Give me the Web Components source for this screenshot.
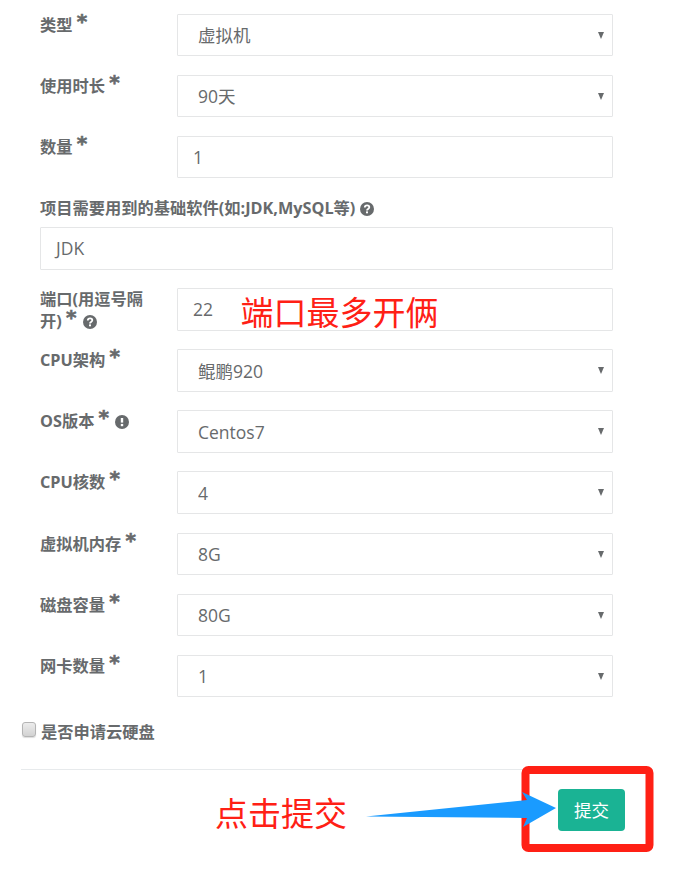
<!DOCTYPE html>
<html lang="zh">
<head>
<meta charset="utf-8">
<title>申请资源</title>
<style>
    html, body { margin: 0; background: #fff; }
    body {
        position: relative;
        height: 869px;
        overflow: hidden;
        color: #676a6c;
        font-family: "Open Sans", "Noto Sans CJK SC", sans-serif;
    }
</style>
</head>
<body>
<apply-form>
    <form-row label="类型" required><form-select value="虚拟机"></form-select></form-row>
    <form-row label="使用时长" required><form-select value="90天"></form-select></form-row>
    <form-row label="数量" required><form-input value="1"></form-input></form-row>
    <form-row label="项目需要用到的基础软件(如:JDK,MySQL等)" icon="question" stacked><form-input value="JDK" wide></form-input></form-row>
    <form-row label="端口(用逗号隔开)" required icon="question"><form-input value="22"></form-input></form-row>
    <form-row label="CPU架构" required><form-select value="鲲鹏920"></form-select></form-row>
    <form-row label="OS版本" required icon="exclamation"><form-select value="Centos7"></form-select></form-row>
    <form-row label="CPU核数" required><form-select value="4"></form-select></form-row>
    <form-row label="虚拟机内存" required><form-select value="8G"></form-select></form-row>
    <form-row label="磁盘容量" required><form-select value="80G"></form-select></form-row>
    <form-row label="网卡数量" required><form-select value="1"></form-select></form-row>
    <form-check label="是否申请云硬盘"></form-check>
    <form-footer>提交</form-footer>
</apply-form>
<note-marks></note-marks>

<script>
// 表单外层
class ApplyForm extends HTMLElement {
    constructor() {
        super();
        const shadow = this.attachShadow({mode: 'open'});
        shadow.innerHTML = `
            <style>
                :host {
                    display: flex;
                    flex-direction: column;
                    padding: 13.8px 61px 0 40px;
                }
            </style>
            <slot></slot>
        `;
    }
}

// 小图标
class HelpIcon extends HTMLElement {
    constructor() {
        super();
        const shadow = this.attachShadow({mode: 'open'});
        const glyph = this.getAttribute('type') === 'exclamation'
            ? `<path d="M7 3v4.6" stroke="#fff" stroke-width="2.4" fill="none"/><rect x="5.8" y="8.9" width="2.4" height="2.3" fill="#fff"/>`
            : `<path d="M4.8 5.6c0-1.4 1-2.2 2.3-2.2 1.3 0 2.2.8 2.2 1.9 0 1.8-2.3 1.7-2.3 3.2" stroke="#fff" stroke-width="1.8" fill="none"/><rect x="6" y="9.4" width="2" height="1.9" fill="#fff"/>`;
        shadow.innerHTML = `
            <style>
                :host { display: inline-block; width: 14px; height: 14px; vertical-align: -2px; }
                svg { display: block; }
            </style>
            <svg width="14" height="14" viewBox="0 0 14 14">
                <circle cx="7" cy="7" r="7" fill="#676a6c"/>${glyph}
            </svg>
        `;
    }
}

// 一行：标题 + 控件
class FormRow extends HTMLElement {
    constructor() {
        super();
        const shadow = this.attachShadow({mode: 'open'});
        const star = this.hasAttribute('required') ? ' <span class="star">*</span>' : '';
        const icon = this.getAttribute('icon');
        const iconHtml = icon ? ` <help-icon type="${icon}"></help-icon>` : '';
        shadow.innerHTML = `
            <style>
                :host {
                    display: grid;
                    grid-template-columns: 137px 436px;
                    height: 42.5px;
                    margin-bottom: 18.6px;
                }
                :host([stacked]) {
                    grid-template-columns: 573px;
                    grid-template-rows: 30px 42.5px;
                    height: 72.5px;
                }
                .label {
                    box-sizing: border-box;
                    width: 115px;
                    padding-top: 1px;
                    font-size: 16.25px;
                    font-weight: 700;
                    line-height: 21.5px;
                    color: #676a6c;
                }
                :host([stacked]) .label { width: auto; }
                .star {
                    font: 700 20px/0 "DejaVu Sans", sans-serif;
                    -webkit-text-stroke: 0.6px #676a6c;
                    position: relative;
                    top: -3px;
                    margin-right: 2px;
                    color: #676a6c;
                }
            </style>
            <div class="label">${this.getAttribute('label')}${star}${iconHtml}</div>
            <slot></slot>
        `;
    }
}

// 下拉框
class FormSelect extends HTMLElement {
    constructor() {
        super();
        const shadow = this.attachShadow({mode: 'open'});
        shadow.innerHTML = `
            <style>
                :host { display: block; position: relative; height: 42.5px; }
                select {
                    appearance: none;
                    -webkit-appearance: none;
                    box-sizing: border-box;
                    width: 100%;
                    height: 100%;
                    margin: 0;
                    padding: 0 30px 0 20px;
                    border: 1px solid #e5e6e7;
                    border-radius: 1px;
                    background: #fff;
                    color: #676a6c;
                    font: 17.5px "Open Sans", "Noto Sans CJK SC", sans-serif;
                }
                .arrow {
                    position: absolute;
                    right: 9px;
                    top: 18px;
                    width: 0;
                    height: 0;
                    border-left: 3.5px solid transparent;
                    border-right: 3.5px solid transparent;
                    border-top: 7px solid #676a6c;
                }
            </style>
            <select><option>${this.getAttribute('value')}</option></select>
            <span class="arrow"></span>
        `;
    }
}

// 输入框
class FormInput extends HTMLElement {
    constructor() {
        super();
        const shadow = this.attachShadow({mode: 'open'});
        shadow.innerHTML = `
            <style>
                :host { display: block; height: 42.5px; }
                div {
                    box-sizing: border-box;
                    height: 100%;
                    padding: 0 15px;
                    border: 1px solid #e5e6e7;
                    border-radius: 1px;
                    background: #fff;
                    color: #676a6c;
                    font-size: 17.5px;
                    line-height: 41px;
                }
            </style>
            <div>${this.getAttribute('value')}</div>
        `;
    }
}

// 复选框
class FormCheck extends HTMLElement {
    constructor() {
        super();
        const shadow = this.attachShadow({mode: 'open'});
        shadow.innerHTML = `
            <style>
                :host {
                    display: flex;
                    align-items: flex-start;
                    gap: 5px;
                    margin: 0 0 0 -18px;
                    height: 53px;
                    font-size: 16.25px;
                    font-weight: 700;
                    line-height: 32px;
                    color: #676a6c;
                }
                input {
                    appearance: none;
                    -webkit-appearance: none;
                    box-sizing: border-box;
                    width: 14px;
                    height: 15px;
                    margin: 6px 0 0 0;
                    border: 1px solid #b4b4b4;
                    border-radius: 3px;
                    background: linear-gradient(#ececec, #d2d2d2);
                    box-shadow: 0 1px 1px #ddd;
                }
            </style>
            <input type="checkbox">
            <span>${this.getAttribute('label')}</span>
        `;
    }
}

// 底部分割线 + 提交按钮
class FormFooter extends HTMLElement {
    constructor() {
        super();
        const shadow = this.attachShadow({mode: 'open'});
        shadow.innerHTML = `
            <style>
                :host {
                    display: flex;
                    justify-content: flex-end;
                    margin: 0 -40px 0 -19px;
                    padding: 19px 28px 0 0;
                    border-top: 1px solid #e7eaec;
                }
                button {
                    box-sizing: border-box;
                    width: 67px;
                    height: 42px;
                    padding: 0;
                    border: 0;
                    border-radius: 4px;
                    background: #1ab394;
                    color: #fff;
                    font: 17.5px "Open Sans", "Noto Sans CJK SC", sans-serif;
                }
            </style>
            <button type="button"><slot></slot></button>
        `;
    }
}

// 截图上后加的红字、箭头、红框
class NoteMarks extends HTMLElement {
    constructor() {
        super();
        const shadow = this.attachShadow({mode: 'open'});
        shadow.innerHTML = `
            <style>
                :host {
                    position: absolute;
                    inset: 0;
                    pointer-events: none;
                }
                svg { position: absolute; left: 0; top: 0; }
                span {
                    position: absolute;
                    color: #ff2015;
                    font: 33px/44px "Noto Sans CJK SC", sans-serif;
                    white-space: nowrap;
                }
                .port { left: 240.5px; top: 289px; }
                .submit { left: 215px; top: 790px; }
            </style>
            <span class="port">端口最多开俩</span>
            <span class="submit">点击提交</span>
            <svg width="674" height="869">
                <rect x="525.5" y="770" width="124" height="78" rx="3" fill="none" stroke="#ff2015" stroke-width="8"/>
                <path d="M366 816.5 527 800 522 792 556 808 523 827 527 818Z" fill="#1a9bff"/>
            </svg>
        `;
    }
}

customElements.define('apply-form', ApplyForm);
customElements.define('help-icon', HelpIcon);
customElements.define('form-row', FormRow);
customElements.define('form-select', FormSelect);
customElements.define('form-input', FormInput);
customElements.define('form-check', FormCheck);
customElements.define('form-footer', FormFooter);
customElements.define('note-marks', NoteMarks);
</script>
</body>
</html>
